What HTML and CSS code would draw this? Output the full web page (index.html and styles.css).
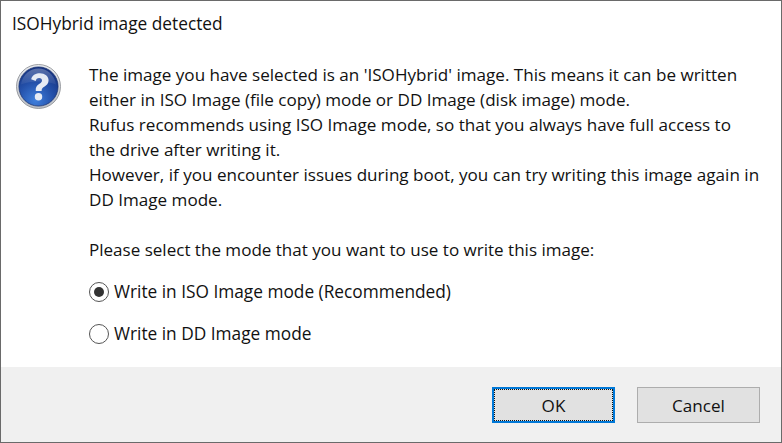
FILE: index.html
```html
<!DOCTYPE html>
<html lang="en">
<head>
<meta charset="utf-8">
<title>ISOHybrid image detected</title>
<link rel="stylesheet" href="styles.css">
</head>
<body>
<div class="dialog">
  <div class="title">ISOHybrid image detected</div>
  <div class="content">
    <svg class="icon" width="45" height="45" viewBox="0 0 46 46">
      <defs>
        <linearGradient id="ring" x1="0" y1="0" x2="0" y2="1">
          <stop offset="0" stop-color="#e8eaee"/>
          <stop offset="1" stop-color="#bcc0c6"/>
        </linearGradient>
        <radialGradient id="ball" cx="0.42" cy="0.85" r="0.85">
          <stop offset="0" stop-color="#3f7fdc"/>
          <stop offset="0.55" stop-color="#234fa8"/>
          <stop offset="1" stop-color="#14317f"/>
        </radialGradient>
        <linearGradient id="gloss" x1="0" y1="0" x2="0" y2="1">
          <stop offset="0" stop-color="#ffffff" stop-opacity="0.3"/>
          <stop offset="1" stop-color="#ffffff" stop-opacity="0.05"/>
        </linearGradient>
      </defs>
      <circle cx="23" cy="23" r="22.500" fill="url(#ring)" stroke="#85888d" stroke-width="0.8"/>
      <circle cx="23" cy="23" r="20" fill="url(#ball)" stroke="#17306f" stroke-width="0.8"/>
      <path d="M5 21C7 10 15 4.500 23 4.500S39 10 41 21c-10-4-26-4-36 0z" fill="url(#gloss)"/>
      <path d="M15.500 15.500C17 11 20.500 9.500 24.500 9.500c5 0 8.800 3 8.800 7.200 0 3.300-2 5.200-4.400 6.600-2 1.200-2.700 2.200-2.700 4.200h-6c-.3-3.600 1-5.400 3.400-7 1.900-1.300 3-2.300 3-3.700 0-1.600-1.100-2.600-2.900-2.600-2 0-3.200 1.200-3.600 3.300z" fill="#e6ebf4"/>
      <circle cx="23" cy="33.500" r="3.800" fill="#e6ebf4"/>
    </svg>
    <div class="body">
      <p class="message">The image you have selected is an 'ISOHybrid' image. This means it can be written<br>either in ISO Image (file copy) mode or DD Image (disk image) mode.<br>Rufus recommends using ISO Image mode, so that you always have full access to<br>the drive after writing it.<br>However, if you encounter issues during boot, you can try writing this image again in<br>DD Image mode.</p>
      <p class="prompt">Please select the mode that you want to use to write this image:</p>
      <div class="option"><span class="radio checked"></span><span>Write in ISO Image mode (Recommended)</span></div>
      <div class="option"><span class="radio"></span><span>Write in DD Image mode</span></div>
    </div>
  </div>
  <div class="footer">
    <div class="button default"><span class="focus">OK</span></div>
    <div class="button">Cancel</div>
  </div>
</div>
</body>
</html>
```
FILE: styles.css
```css
html, body {
  margin: 0;
  padding: 0;
  height: 100%;
  overflow: hidden;
  background: #fff;
}
.dialog {
  box-sizing: border-box;
  width: 782px;
  height: 443px;
  border: 1px solid #6a6a6a;
  display: flex;
  flex-direction: column;
  font-family: "Open Sans", "Noto Sans", sans-serif;
  font-size: 17.1px;
  color: #111;
  background: #fff;
}
.title {
  padding: 11px 0 0 11px;
  height: 24px;
  line-height: 24px;
  font-size: 17.3px;
}
.content {
  flex: 1;
  display: flex;
  padding: 28px 0 0 15px;
}
.icon {
  flex: none;
  margin-right: 28px;
}
.body {
  margin-top: -2px;
}
.message {
  margin: 0;
  font-size: 17.08px;
  line-height: 25px;
}
.prompt {
  margin: 26px 0 0;
  font-size: 17.04px;
  line-height: 24px;
}
.option {
  display: flex;
  align-items: center;
  gap: 5px;
  height: 24px;
  line-height: 24px;
  margin-top: 18px;
  font-size: 17.3px;
}
.radio {
  box-sizing: border-box;
  width: 20px;
  height: 20px;
  margin-bottom: 1px;
  border: 1.5px solid #555;
  border-radius: 50%;
  background: #fff;
  display: flex;
  align-items: center;
  justify-content: center;
}
.radio.checked::after {
  content: "";
  width: 10px;
  height: 10px;
  border-radius: 50%;
  background: #333;
}
.footer {
  flex: none;
  height: 75px;
  box-sizing: border-box;
  background: #f0f0f0;
  display: flex;
  justify-content: flex-end;
  gap: 22px;
  padding: 20px 21px 0 0;
}
.button {
  box-sizing: border-box;
  width: 123px;
  height: 36px;
  background: #e1e1e1;
  border: 1px solid #adadad;
  display: flex;
  align-items: center;
  justify-content: center;
}
.button.default {
  border: 2px solid #0078d7;
  align-items: stretch;
  justify-content: stretch;
}
.focus {
  flex: 1;
  border: 1px dotted #111;
  display: flex;
  align-items: center;
  justify-content: center;
}
```
